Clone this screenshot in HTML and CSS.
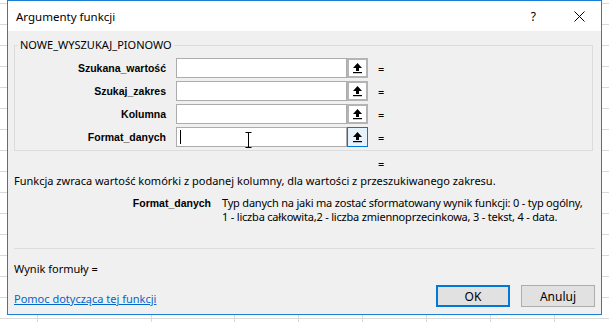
FILE: index.html
```html
<!DOCTYPE html>
<html lang="pl">
<head>
    <meta charset="UTF-8">
    <title>Argumenty funkcji</title>
    <link rel="stylesheet" href="styles.css">
</head>
<body>
    <div class="sheet">
        <div class="dialog">
            <div class="titlebar">
                <span class="title">Argumenty funkcji</span>
                <span class="help">?</span>
                <svg class="close" width="11" height="11" viewBox="0 0 11 11">
                    <path d="M0.5 0.5 L10.5 10.5 M10.5 0.5 L0.5 10.5" stroke="#000" stroke-width="1" fill="none"/>
                </svg>
            </div>

            <div class="content">
                <fieldset class="args">
                    <legend>NOWE_WYSZUKAJ_PIONOWO</legend>

                    <div class="arg-row">
                        <span class="arg-label">Szukana_wartość</span>
                        <div class="field"></div>
                        <div class="pick"><svg width="9" height="11" viewBox="0 0 9 11"><path d="M4.5 0 L9 5 H6 V8 H3 V5 H0 Z" fill="#000"/><rect x="0" y="9" width="9" height="1.2" fill="#000"/></svg></div>
                        <span class="eq">=</span>
                    </div>
                    <div class="arg-row">
                        <span class="arg-label">Szukaj_zakres</span>
                        <div class="field"></div>
                        <div class="pick"><svg width="9" height="11" viewBox="0 0 9 11"><path d="M4.5 0 L9 5 H6 V8 H3 V5 H0 Z" fill="#000"/><rect x="0" y="9" width="9" height="1.2" fill="#000"/></svg></div>
                        <span class="eq">=</span>
                    </div>
                    <div class="arg-row">
                        <span class="arg-label">Kolumna</span>
                        <div class="field"></div>
                        <div class="pick"><svg width="9" height="11" viewBox="0 0 9 11"><path d="M4.5 0 L9 5 H6 V8 H3 V5 H0 Z" fill="#000"/><rect x="0" y="9" width="9" height="1.2" fill="#000"/></svg></div>
                        <span class="eq">=</span>
                    </div>
                    <div class="arg-row">
                        <span class="arg-label">Format_danych</span>
                        <div class="field active">
                            <span class="caret"></span>
                            <svg class="ibeam" width="7" height="18" viewBox="0 0 7 18">
                                <path d="M0.5 1.5 H6.5 M3.5 1.5 V16.5 M0.5 16.5 H6.5" stroke="#000" stroke-width="1" fill="none"/>
                            </svg>
                        </div>
                        <div class="pick active"><svg width="9" height="11" viewBox="0 0 9 11"><path d="M4.5 0 L9 5 H6 V8 H3 V5 H0 Z" fill="#000"/><rect x="0" y="9" width="9" height="1.2" fill="#000"/></svg></div>
                        <span class="eq">=</span>
                    </div>
                </fieldset>

                <div class="result-eq">=</div>
                <p class="summary">Funkcja zwraca wartość komórki z podanej kolumny, dla wartości z przeszukiwanego zakresu.</p>

                <div class="arg-help">
                    <span class="arg-help-name">Format_danych</span>
                    <div class="arg-help-text">
                        <div>Typ danych na jaki ma zostać sformatowany wynik funkcji: 0 - typ ogólny,</div>
                        <div>1 - liczba całkowita,2 - liczba zmiennoprzecinkowa, 3 - tekst, 4 - data.</div>
                    </div>
                </div>

                <hr class="divider">

                <div class="formula">Wynik formuły =</div>

                <div class="footer">
                    <a class="help-link" href="#">Pomoc dotycząca tej funkcji</a>
                    <div class="buttons">
                        <button class="btn default">OK</button>
                        <button class="btn">Anuluj</button>
                    </div>
                </div>
            </div>
        </div>
    </div>
</body>
</html>
```

FILE: styles.css
```css
body {
    margin: 0;
    background-color: #fff;
    font-family: "Noto Sans", sans-serif;
    font-size: 11px;
    color: #000;
}

.sheet {
    width: 609px;
    height: 322px;
    overflow: hidden;
    background-color: #fff;
    background-image:
        linear-gradient(to right,
            transparent 0 37px, #d9d9d9 37px 38px,
            transparent 38px 151px, #d9d9d9 151px 152px,
            transparent 152px 234px, #d9d9d9 234px 235px,
            transparent 235px 298px, #d9d9d9 298px 299px,
            transparent 299px 362px, #d9d9d9 362px 363px,
            transparent 363px 426px, #d9d9d9 426px 427px,
            transparent 427px 490px, #d9d9d9 490px 491px,
            transparent 491px 554px, #d9d9d9 554px 555px,
            transparent 555px),
        repeating-linear-gradient(to bottom,
            transparent 0 3px, #d9d9d9 3px 4px, transparent 4px 21px);
}

.dialog {
    box-sizing: border-box;
    width: 595px;
    height: 315px;
    margin-left: 7px;
    border: 1px solid #1a7fd6;
    background-color: #f0f0f0;
    display: flex;
    flex-direction: column;
}

.titlebar {
    flex-shrink: 0;
    height: 30px;
    background-color: #fff;
    display: flex;
    align-items: center;
    padding-left: 8px;
    font-size: 11.5px;
}

.title {
    flex: 1;
}

.help {
    margin-right: 38px;
    font-size: 12px;
}

.close {
    margin-right: 16px;
}

.content {
    padding: 0 6px;
    position: relative;
}

/* argument box */
.args {
    margin: 6px 0 0 0;
    padding: 5px 0 3px 0;
    border: 1px solid #dcdcdc;
    width: 579px;
    box-sizing: border-box;
}

.args legend {
    margin-left: 3px;
    padding: 0 2px;
    line-height: 16px;
}

.arg-row {
    display: flex;
    align-items: center;
    height: 20px;
    margin-bottom: 3px;
}

.arg-row:last-child {
    margin-bottom: 0;
}

.arg-label {
    width: 151px;
    margin-right: 10px;
    text-align: right;
    font-family: "Liberation Sans", sans-serif;
    font-weight: bold;
    font-size: 10.5px;
}

.field {
    box-sizing: border-box;
    width: 171px;
    height: 20px;
    background-color: #fff;
    border: 1px solid #acacac;
    position: relative;
}

.caret {
    position: absolute;
    left: 3px;
    top: 2px;
    width: 1px;
    height: 14px;
    background-color: #000;
}

.ibeam {
    position: absolute;
    left: 68px;
    top: 3px;
}

.pick {
    box-sizing: border-box;
    width: 21px;
    height: 20px;
    border: 2px solid #b4b4b4;
    background-color: #fff;
    display: flex;
    align-items: center;
    justify-content: center;
}

.pick.active {
    border: 1px solid #0078d7;
    background-color: #e5f1fb;
}

.eq {
    margin-left: 10px;
}

.result-eq {
    margin: 5px 0 0 364px;
    line-height: 16px;
}

.summary {
    margin: 1px 0 0 0;
    line-height: 16px;
}

.arg-help {
    display: flex;
    margin-top: 7px;
    line-height: 14px;
}

.arg-help-name {
    width: 197px;
    text-align: right;
    font-family: "Liberation Sans", sans-serif;
    font-weight: bold;
    font-size: 10.5px;
    flex-shrink: 0;
}

.arg-help-text {
    margin-left: 11px;
    white-space: nowrap;
    letter-spacing: -0.2px;
}

.divider {
    margin: 24px 0 0 0;
    border: none;
    border-top: 1px solid #dcdcdc;
    width: 581px;
}

.formula {
    margin-top: 12px;
    line-height: 16px;
}

.footer {
    display: flex;
    justify-content: space-between;
    align-items: flex-end;
    margin-top: 8px;
}

.help-link {
    color: #0066cc;
    line-height: 16px;
}

.buttons {
    display: flex;
    gap: 11px;
}

.btn {
    box-sizing: border-box;
    width: 74px;
    height: 22px;
    background-color: #e1e1e1;
    border: 1px solid #adadad;
    font-family: "Noto Sans", sans-serif;
    font-size: 12px;
    padding: 0;
}

.btn.default {
    border: 2px solid #0078d7;
}
```
